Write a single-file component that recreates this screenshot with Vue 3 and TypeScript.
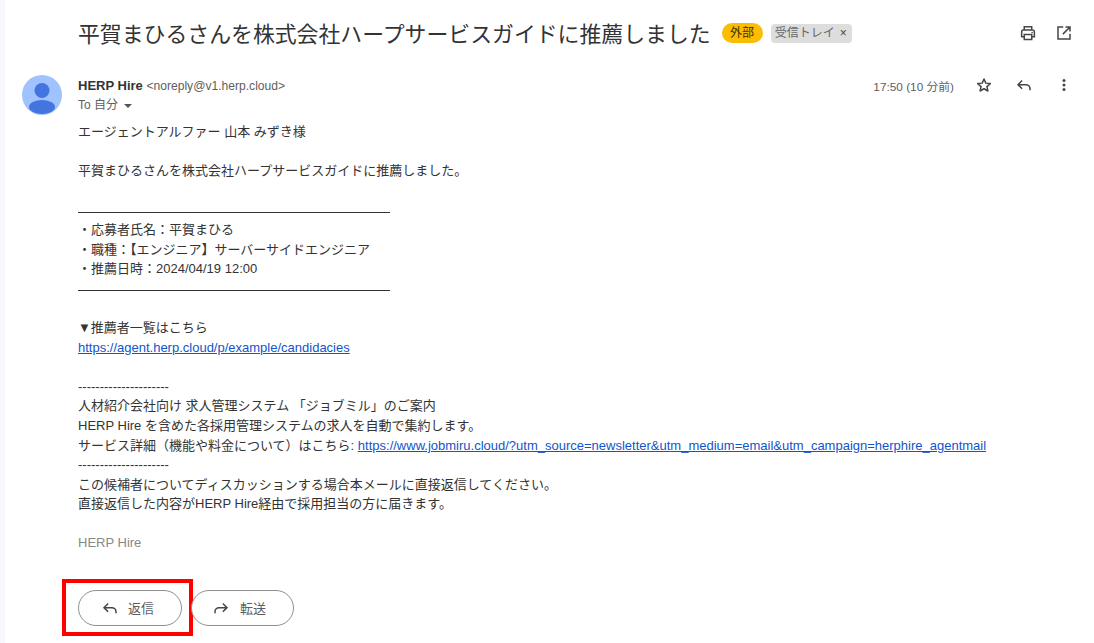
<script setup lang="ts">
</script>

<template>
  <div class="page">
    <div class="strip"></div>
    <main class="mail">
      <header class="subject-row">
        <h1 class="subject">平賀まひるさんを株式会社ハープサービスガイドに推薦しました</h1>
        <span class="tag-ext">外部</span>
        <span class="tag-inbox">受信トレイ<span class="tag-x">×</span></span>
        <div class="top-icons">
          <svg class="ic" viewBox="0 0 24 24" fill="none" stroke="#444746" stroke-width="2"><path d="M7 8V3.500h10V8M7 17H3.500v-6.500A2.500 2.500 0 0 1 6 8h12a2.500 2.500 0 0 1 2.500 2.500V17H17"/><path d="M7 14h10v6.500H7z"/><circle cx="17.500" cy="11.500" r=".6" fill="#444746" stroke-width="1"/></svg>
          <svg class="ic" viewBox="0 0 24 24" fill="none" stroke="#444746" stroke-width="2"><path d="M11 4H4v16h16v-7"/><path d="M14 4h6v6M20 4L10.500 13.500"/></svg>
        </div>
      </header>

      <section class="message">
        <div class="avatar">
          <svg viewBox="0 0 40 40" width="40" height="40"><circle cx="20" cy="20" r="20" fill="#a0c3ff"/><circle cx="20" cy="15.500" r="7.500" fill="#4374e0"/><ellipse cx="20" cy="32" rx="13" ry="7" fill="#4374e0"/></svg>
        </div>
        <div class="content">
          <div class="meta">
            <div class="from"><strong>HERP Hire</strong> <span class="addr">&lt;noreply@v1.herp.cloud&gt;</span></div>
            <div class="time">17:50 (10 分前)</div>
            <div class="meta-icons">
              <svg class="ic" viewBox="0 0 24 24" fill="none" stroke="#444746" stroke-width="2" stroke-linejoin="round"><path d="M12 4l2.400 5.500 6 .6-4.500 4 1.300 5.900L12 17l-5.200 3 1.300-5.900-4.500-4 6-.6z"/></svg>
              <svg class="ic" viewBox="0 0 24 24" fill="none" stroke="#444746" stroke-width="2"><path d="M9.500 6L4 11.500 9.500 17M4 11.500h10.500a5.500 5.500 0 0 1 5.500 5.500v2"/></svg>
              <svg class="ic" viewBox="0 0 24 24" fill="#444746"><circle cx="12" cy="6" r="2"/><circle cx="12" cy="12" r="2"/><circle cx="12" cy="18" r="2"/></svg>
            </div>
          </div>
          <div class="to">To 自分 <span class="caret"></span></div>
          <div class="body">
            <p>エージェントアルファー 山本 みずき様</p>
            <p></p>
            <p>平賀まひるさんを株式会社ハープサービスガイドに推薦しました。</p>
            <p></p>
            <p class="rule"></p>
            <p>・応募者氏名：平賀まひる</p>
            <p>・職種：【エンジニア】サーバーサイドエンジニア</p>
            <p>・推薦日時：2024/04/19 12:00</p>
            <p class="rule"></p>
            <p></p>
            <p>▼推薦者一覧はこちら</p>
            <p><a href="#">https://agent.herp.cloud/p/example/candidacies</a></p>
            <p></p>
            <p>---------------------</p>
            <p>人材紹介会社向け 求人管理システム 「ジョブミル」のご案内</p>
            <p>HERP Hire を含めた各採用管理システムの求人を自動で集約します。</p>
            <p>サービス詳細（機能や料金について）はこちら: <a href="#">https://www.jobmiru.cloud/?utm_source=newsletter&amp;utm_medium=email&amp;utm_campaign=herphire_agentmail</a></p>
            <p>---------------------</p>
            <p>この候補者についてディスカッションする場合本メールに直接返信してください。</p>
            <p>直接返信した内容がHERP Hire経由で採用担当の方に届きます。</p>
            <p></p>
            <p class="sig">HERP Hire</p>
          </div>
          <div class="actions">
            <button class="btn">
              <svg class="ic btn-ic" viewBox="0 0 24 24" fill="none" stroke="#444746" stroke-width="2"><path d="M9.500 6L4 11.500 9.500 17M4 11.500h10.500a5.500 5.500 0 0 1 5.500 5.500v2"/></svg>
              返信
              <span class="highlight"></span>
            </button>
            <button class="btn forward">
              <svg class="ic btn-ic" viewBox="0 0 24 24" fill="none" stroke="#444746" stroke-width="2"><path d="M14.500 6L20 11.500 14.500 17M20 11.500H9.500A5.500 5.500 0 0 0 4 17v2"/></svg>
              転送
            </button>
          </div>
        </div>
      </section>
    </main>
  </div>
</template>

<style scoped>
.page {
  display: flex;
  width: 1094px;
  height: 643px;
  overflow: hidden;
  background: #fff;
  font-family: "Liberation Sans", "Noto Sans CJK JP", sans-serif;
  color: #222;
}
.strip { width: 5px; flex: none; background: #f6f8fc; }
.mail { flex: 1; min-width: 0; }
.subject-row {
  display: flex;
  align-items: center;
  height: 28px;
  margin-top: 18px;
  padding-left: 73px;
}
.subject {
  margin: 0;
  font-size: 21.87px;
  font-weight: 400;
  color: #333;
  white-space: nowrap;
}
.tag-ext {
  margin: 2px 0 0 11px;
  width: 41px;
  height: 20px;
  line-height: 20px;
  text-align: center;
  border-radius: 10px;
  background: #fbbc04;
  font-size: 12px;
  color: #3c3000;
}
.tag-inbox {
  margin: 2px 0 0 8px;
  padding: 0 5px 0 4px;
  height: 19px;
  line-height: 19px;
  border-radius: 4px;
  background: #ddd;
  font-size: 12px;
  color: #666;
  white-space: nowrap;
}
.tag-x { margin-left: 5px; color: #444; }
.top-icons {
  display: flex;
  gap: 18px;
  margin-left: auto;
  margin-right: 21px;
  padding-top: 2px;
}
.ic { width: 18px; height: 18px; display: block; }
.message {
  display: flex;
  margin-top: 29px;
  padding-left: 17px;
}
.avatar { width: 40px; height: 40px; flex: none; margin-right: 16px; }
.content { flex: 1; min-width: 0; }
.meta {
  display: flex;
  align-items: center;
  height: 18px;
  margin-top: 1px;
}
.from { font-size: 13px; color: #1f1f1f; }
.from strong { font-weight: 700; font-size: 13px; color: #333; }
.addr { font-size: 12.1px; color: #5e5e5e; }
.time { margin-left: auto; font-size: 11.8px; color: #5e5e5e; }
.meta-icons {
  display: flex;
  gap: 22px;
  margin-left: 21px;
  margin-right: 21px;
}
.to {
  margin-top: 3px;
  font-size: 12px;
  color: #5e5e5e;
  height: 16px;
  line-height: 16px;
}
.caret {
  display: inline-block;
  margin-left: 3px;
  vertical-align: middle;
  border-left: 4px solid transparent;
  border-right: 4px solid transparent;
  border-top: 4px solid #555;
}
.body {
  margin-top: 9px;
  font-size: 13px;
  line-height: 19.6px;
  color: #333;
}
.body p { margin: 0; white-space: nowrap; height: 19.6px; }
.body p.rule::after {
  content: "";
  display: block;
  width: 312px;
  height: 11.500px;
  border-bottom: 1px solid #333;
}
.body a { color: #1155cc; text-decoration: underline; }
.body p.sig { color: #888; }
.actions {
  display: flex;
  gap: 9px;
  margin-top: 36.8px;
}
.btn {
  position: relative;
  display: flex;
  align-items: center;
  width: 104px;
  height: 36px;
  padding: 0 0 0 22px;
  border: 1px solid #8f8f8f;
  border-radius: 18px;
  background: #fff;
  font: inherit;
  font-size: 13px;
  color: #5e5e5e;
}
.btn-ic { margin-right: 9px; }
.btn.forward { width: 103px; padding-left: 20px; }
.btn.forward .btn-ic { margin-right: 10px; }
.highlight {
  position: absolute;
  left: -17px;
  top: -12px;
  width: 131px;
  height: 57px;
  box-sizing: border-box;
  border: 4px solid #f00;
}
</style>

<style>
html, body { margin: 0; background: #fff; }
</style>
